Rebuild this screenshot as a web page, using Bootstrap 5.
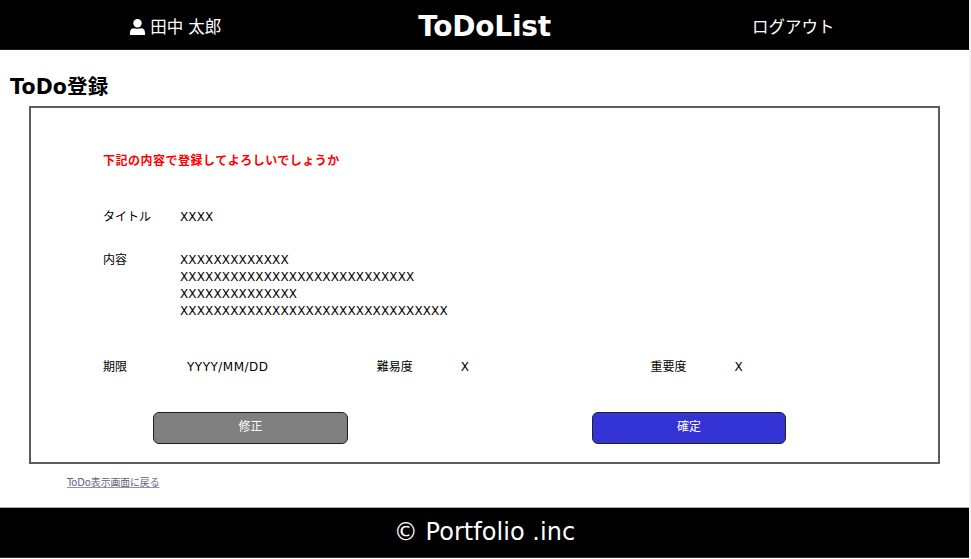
<!DOCTYPE html>
<html lang="ja">
<head>
<meta charset="utf-8">
<meta name="viewport" content="width=device-width, initial-scale=1">
<title>ToDoList</title>
<link href="https://cdn.jsdelivr.net/npm/bootstrap@5.3.0/dist/css/bootstrap.min.css" rel="stylesheet">
<style>
body{font-family:"DejaVu Sans","Noto Sans CJK JP",sans-serif;font-size:12px;line-height:17px;color:#000;background:#fff;height:559px;overflow:hidden}
.page{width:969px;height:558px;box-shadow:2px 0 #f1f1f1}
.topbar{height:50px;padding:4px 32px 0 32px;border-bottom:1px solid #1c1c1c;background:#000}
.topbar>*{flex:1 1 0}
.topbar .brand{flex:0 0 330px}
.side-text{font-size:16.5px;line-height:24px}
.side-text span{padding-top:2px}
.user-icon{width:15px;height:16px;margin-right:5px}
.brand{font-size:28px;line-height:46px;letter-spacing:-.25px}
.heading{font-size:20.5px;line-height:30px;margin:22px 0 0 10px;letter-spacing:.15px}
.panel{width:911px;height:358px;margin:4px 0 0 29px;border:2px solid #5c5c5c;padding:45px 72px 0}
.notice{color:#f00;font-size:12px;font-weight:700;letter-spacing:.5px}
.latin{letter-spacing:.15px}
.date-text{letter-spacing:.5px}
.name-col{width:77px;flex:none}
.title-row{margin-top:39px}
.content-row{margin-top:26px}
.meta-row{margin-top:39px}
.meta-row>div{width:273.700px;flex:none}
.meta-row .name-col{width:84px}
.actions{margin-top:36px;padding-left:50px;gap:244px}
.actions .btn{width:195px;height:32px;font-size:12px;line-height:17px;padding:0 0 2px;border:1px solid #222;border-radius:6px;color:#fff}
.actions .btn-ok{width:194px}
.btn-fix{background:#808080}
.btn-ok{background:#3333d6}
.back{font-size:9.8px;line-height:14px;margin:12px 0 0 67px;color:#5b6473;text-decoration-color:#a982c8}
.footer-bar{height:51px;background:#000;border-top:1px solid #aaa;border-bottom:1px solid #333;font-size:24px;line-height:49px;letter-spacing:.05px}
</style>
</head>
<body>
<div class="page d-flex flex-column">
<header class="topbar d-flex align-items-center text-white text-center">
<div class="side-text d-flex align-items-center justify-content-center"><svg class="user-icon" viewBox="0 0 15 16" fill="#fff"><circle cx="7.500" cy="4.200" r="4.200"/><path d="M0 16v-2.500C0 10.800 1.700 9.300 4 9.300c1.200.6 5.800.6 7 0 2.300 0 4 1.500 4 4.200V16z"/></svg><span>田中 太郎</span></div>
<div class="brand fw-bold">ToDoList</div>
<div class="side-text d-flex justify-content-center"><span>ログアウト</span></div>
</header>
<main>
<h1 class="heading fw-bold">ToDo登録</h1>
<section class="panel">
<div class="notice">下記の内容で登録してよろしいでしょうか</div>
<div class="title-row d-flex"><div class="name-col">タイトル</div><div class="latin">XXXX</div></div>
<div class="content-row d-flex"><div class="name-col">内容</div><div class="latin">XXXXXXXXXXXXX<br>XXXXXXXXXXXXXXXXXXXXXXXXXXXX<br>XXXXXXXXXXXXXX<br>XXXXXXXXXXXXXXXXXXXXXXXXXXXXXXXX</div></div>
<div class="meta-row d-flex">
<div class="d-flex"><span class="name-col">期限</span><span class="date-text">YYYY/MM/DD</span></div>
<div class="d-flex"><span class="name-col">難易度</span><span class="latin">X</span></div>
<div class="d-flex"><span class="name-col">重要度</span><span class="latin">X</span></div>
</div>
<div class="actions d-flex"><button class="btn btn-fix" type="button">修正</button><button class="btn btn-ok" type="button">確定</button></div>
</section>
<a class="back d-inline-block" href="#">ToDo表示画面に戻る</a>
</main>
<footer class="footer-bar text-white text-center mt-auto">© Portfolio .inc</footer>
</div>
<script src="https://cdn.jsdelivr.net/npm/bootstrap@5.3.0/dist/js/bootstrap.bundle.min.js"></script>
</body>
</html>
